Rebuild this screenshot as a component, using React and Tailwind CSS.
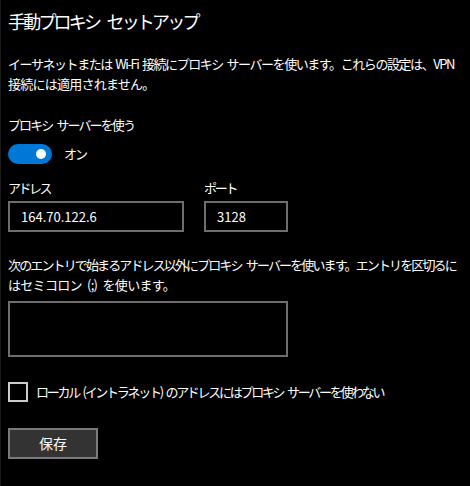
export default function App() {
  const font = { fontFamily: "'Noto Sans CJK JP', 'Noto Sans', sans-serif" }

  return (
    <div
      className="w-[470px] h-[486px] bg-black text-white border-l border-[#1c1c1c] overflow-hidden"
      style={font}
    >
      <div className="pl-[7px] pt-[7px]">
        {/* Title */}
        <h1 className="text-[18px] leading-[28px] tracking-[-2.8px] [word-spacing:6px] whitespace-nowrap">
          手動プロキシ セットアップ
        </h1>

        {/* Description */}
        <p className="mt-[19px] text-[13px] leading-[20px] whitespace-nowrap [word-spacing:2px]">
          <span className="tracking-[-1.43px]">イーサネットまたは Wi-Fi 接続にプロキシ サーバーを使います。これらの設定は、VPN</span>
          <br />
          <span className="tracking-[-0.75px]">接続には適用されません。</span>
        </p>

        {/* Toggle */}
        <p className="mt-[21px] text-[13px] leading-[20px] tracking-[-1.9px] [word-spacing:3px]">プロキシ サーバーを使う</p>
        <div className="mt-[9px] flex items-center gap-[12px]">
          <div className="w-[44px] h-[20px] rounded-full bg-[#0078d7] flex items-center justify-end pr-[6px]">
            <div className="w-[10px] h-[10px] rounded-full bg-white" />
          </div>
          <span className="text-[13px] leading-[20px] tracking-[-2px]">オン</span>
        </div>

        {/* Address / Port */}
        <div className="mt-[14px] flex gap-[20px]">
          <div className="flex flex-col">
            <label className="text-[13px] leading-[20px] tracking-[-2.5px]">アドレス</label>
            <div className="mt-[3px] w-[176px] h-[31px] border-2 border-[#6e6e6e] flex items-center px-[11px] text-[13px]">
              164.70.122.6
            </div>
          </div>
          <div className="flex flex-col">
            <label className="text-[13px] leading-[20px] tracking-[-2.3px]">ポート</label>
            <div className="mt-[3px] w-[84px] h-[31px] border-2 border-[#6e6e6e] flex items-center px-[11px] text-[13px]">
              3128
            </div>
          </div>
        </div>

        {/* Exceptions */}
        <p className="mt-[23px] text-[13px] leading-[20px] whitespace-nowrap [word-spacing:3px]">
          <span className="tracking-[-1.87px]">次のエントリで始まるアドレス以外にプロキシ サーバーを使います。エントリを区切るに</span>
          <br />
          <span className="tracking-[-0.7px]">はセミコロン (;) を使います。</span>
        </p>
        <div className="mt-[6px] w-[280px] h-[56px] border-2 border-[#6e6e6e]" />

        {/* Checkbox */}
        <div className="mt-[25px] flex items-center gap-[8px]">
          <div className="w-[20px] h-[20px] shrink-0 border-2 border-[#cccccc]" />
          <span className="text-[13px] leading-[20px] tracking-[-2.28px] [word-spacing:3px] whitespace-nowrap">
            ローカル (イントラネット) のアドレスにはプロキシ サーバーを使わない
          </span>
        </div>

        {/* Save */}
        <button className="mt-[26px] w-[90px] h-[31px] bg-[#333333] border-2 border-[#7a7a7a] text-[14px] text-white">
          保存
        </button>
      </div>
    </div>
  )
}
